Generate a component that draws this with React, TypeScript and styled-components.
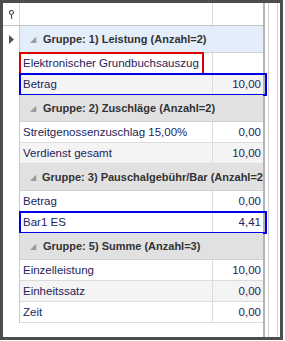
import React from "react";
import styled, { createGlobalStyle } from "styled-components";

const Global = createGlobalStyle`
  html, body { margin: 0; padding: 0; background: #ffffff; }
  body { font-family: "Liberation Sans", Arial, sans-serif; }
`;

const Frame = styled.div`
  box-sizing: border-box;
  width: 283px;
  height: 340px;
  border: 3px solid #4d4d4d;
  background: #ffffff;
  display: flex;
  overflow: hidden;
`;

const GridArea = styled.div`
  width: 262px;
  display: flex;
  flex-direction: column;
  border-right: 2px solid #b4b4b4;
  box-sizing: border-box;
`;

const ScrollStrip = styled.div`
  flex: 1;
  display: flex;
  padding-left: 3px;
`;

const ScrollTrack = styled.div`
  width: 8px;
  border-left: 1px solid #d4d4d4;
  border-right: 1px solid #d4d4d4;
`;

const HeaderRow = styled.div`
  display: grid;
  grid-template-columns: 17px 193px 50px;
  height: 23px;
  border-bottom: 1px solid #c4c4c4;
  box-sizing: border-box;
`;

const HeaderCell = styled.div<{ $last?: boolean }>`
  border-right: ${(p) => (p.$last ? "none" : "1px solid #dadada")};
  display: flex;
  align-items: center;
  justify-content: center;
`;

const Row = styled.div<{ $h: number }>`
  position: relative;
  display: grid;
  grid-template-columns: 17px 193px 50px;
  height: ${(p) => p.$h}px;
  box-sizing: border-box;
`;

const Indicator = styled.div`
  border-right: 1px solid #c8c8c8;
  background: #ffffff;
  display: flex;
  align-items: center;
  justify-content: center;
`;

const Cell = styled.div<{ $bg: string; $right?: boolean; $last?: boolean }>`
  background: ${(p) => p.$bg};
  border-bottom: 1px solid #dcdcdc;
  border-right: ${(p) => (p.$last ? "none" : "1px solid #dcdcdc")};
  box-sizing: border-box;
  display: flex;
  align-items: center;
  justify-content: ${(p) => (p.$right ? "flex-end" : "flex-start")};
  padding: ${(p) => (p.$right ? "0 2px 0 0" : "0 0 0 3px")};
  font-size: 11.5px;
  color: #24245a;
  white-space: nowrap;
  overflow: hidden;
`;

const GroupCell = styled.div<{ $bg: string }>`
  grid-column: 2 / 4;
  background: ${(p) => p.$bg};
  border-bottom: 1px solid #d2d2d2;
  box-sizing: border-box;
  display: flex;
  align-items: center;
  padding-left: 10px;
  gap: 6px;
  font-size: 11px;
  font-weight: bold;
  color: #333333;
  white-space: nowrap;
  overflow: hidden;
`;

const Expander = styled.span`
  font-size: 8px;
  color: #9a9a9a;
  font-weight: normal;
  width: 7px;
`;

const Mark = styled.div<{ $color: string; $w: number }>`
  position: absolute;
  left: 16px;
  top: -1px;
  width: ${(p) => p.$w}px;
  bottom: -1px;
  border: 2px solid ${(p) => p.$color};
  box-sizing: border-box;
  pointer-events: none;
`;

const Filler = styled.div`
  flex: 1;
`;

const PinIcon = () => (
  <svg width="7" height="9" viewBox="0 0 7 9">
    <circle cx="3.5" cy="2.5" r="2" fill="none" stroke="#555" strokeWidth="1.2" />
    <line x1="3.5" y1="4.5" x2="3.5" y2="9" stroke="#555" strokeWidth="1.2" />
  </svg>
);

const RowArrow = () => (
  <svg width="5" height="9" viewBox="0 0 5 9">
    <polygon points="0,0 5,4.5 0,9" fill="#555" />
  </svg>
);

type Item =
  | { kind: "group"; text: string; current?: boolean }
  | { kind: "row"; label: string; value: string; alt?: boolean; mark?: "red" | "blue" };

const items: Item[] = [
  { kind: "group", text: "Gruppe: 1) Leistung (Anzahl=2)", current: true },
  { kind: "row", label: "Elektronischer Grundbuchsauszug", value: "", mark: "red" },
  { kind: "row", label: "Betrag", value: "10,00", alt: true, mark: "blue" },
  { kind: "group", text: "Gruppe: 2) Zuschläge (Anzahl=2)" },
  { kind: "row", label: "Streitgenossenzuschlag 15,00%", value: "0,00" },
  { kind: "row", label: "Verdienst gesamt", value: "10,00", alt: true },
  { kind: "group", text: "Gruppe: 3) Pauschalgebühr/Bar (Anzahl=2)" },
  { kind: "row", label: "Betrag", value: "0,00" },
  { kind: "row", label: "Bar1 ES", value: "4,41", mark: "blue" },
  { kind: "group", text: "Gruppe: 5) Summe (Anzahl=3)" },
  { kind: "row", label: "Einzelleistung", value: "10,00" },
  { kind: "row", label: "Einheitssatz", value: "0,00", alt: true },
  { kind: "row", label: "Zeit", value: "0,00" },
];

export default function App() {
  return (
    <>
      <Global />
      <Frame>
        <GridArea>
          <HeaderRow>
            <HeaderCell>
              <PinIcon />
            </HeaderCell>
            <HeaderCell />
            <HeaderCell $last />
          </HeaderRow>
          {items.map((it, i) =>
            it.kind === "group" ? (
              <Row key={i} $h={27}>
                <Indicator>{it.current ? <RowArrow /> : null}</Indicator>
                <GroupCell $bg={it.current ? "#e4eefa" : "#e1e1e1"}>
                  <Expander>◢</Expander>
                  {it.text}
                </GroupCell>
              </Row>
            ) : (
              <Row key={i} $h={21}>
                <Indicator />
                <Cell $bg={it.alt ? "#f4f4f4" : "#ffffff"}>{it.label}</Cell>
                <Cell $bg={it.alt ? "#f4f4f4" : "#ffffff"} $right $last>
                  {it.value}
                </Cell>
                {it.mark === "red" && <Mark $color="#e00000" $w={185} />}
                {it.mark === "blue" && <Mark $color="#0000e6" $w={248} />}
              </Row>
            )
          )}
          <Filler />
        </GridArea>
        <ScrollStrip>
          <ScrollTrack />
        </ScrollStrip>
      </Frame>
    </>
  );
}
